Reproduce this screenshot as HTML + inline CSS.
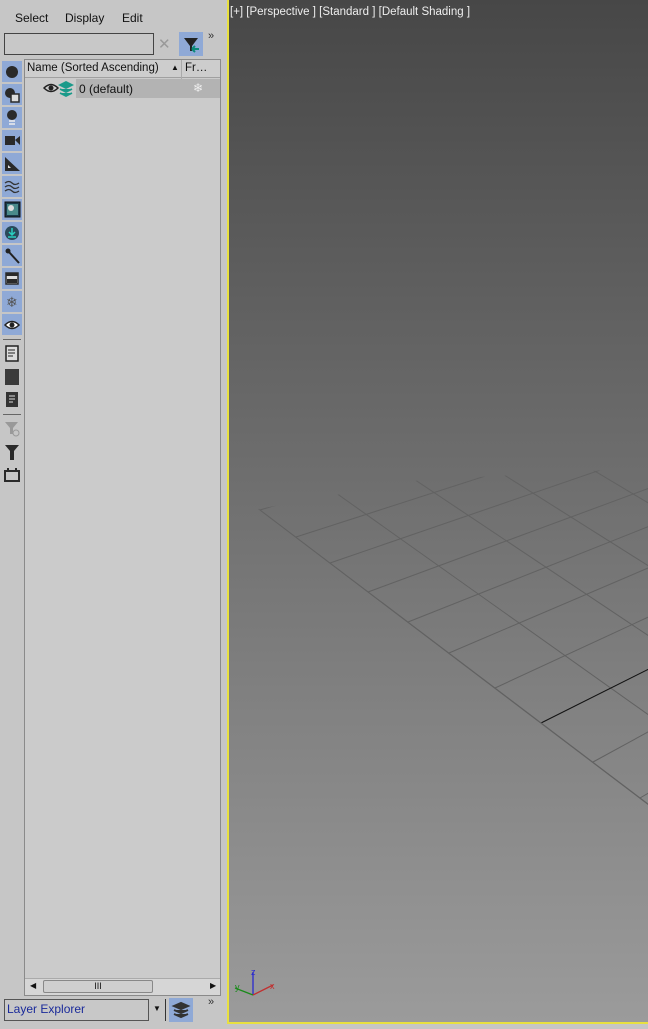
<!DOCTYPE html>
<html><head><meta charset="utf-8"><style>
*{margin:0;padding:0;box-sizing:border-box}
html,body{width:648px;height:1029px;overflow:hidden}
body{background:#c6c6c6;font-family:"Liberation Sans",sans-serif;font-size:12px;color:#111;position:relative}
.a{position:absolute}
.menu span{position:absolute;top:11px;font-size:12px}
.btn{position:absolute;left:2px;width:20px;height:21px;background:#8fa9d6}
.ic{position:absolute;left:2px;width:20px;height:21px}
.sep{position:absolute;left:3px;width:18px;height:1px;background:#666}
</style></head><body>
<div class="menu"><span style="left:15px">Select</span><span style="left:65px">Display</span><span style="left:122px">Edit</span></div>
<div class="a" style="left:4px;top:33px;width:150px;height:22px;border:1px solid #444;background:#c8c8c8"></div>
<div class="a" style="left:158px;top:35px;color:#999;font-size:15px">✕</div>
<div class="a" style="left:179px;top:32px;width:24px;height:24px;background:#8fa9d6">
<svg width="24" height="24"><path d="M5 6h14l-6 8v5h-2v-5z" fill="#222"/><path d="M13 17h7M13 17l3-3M13 17l3 3" stroke="#0a8a7a" stroke-width="2" fill="none"/></svg></div>
<div class="a" style="left:208px;top:30px;font-size:11px;color:#333">»</div>
<div class="a" style="left:208px;top:996px;font-size:11px;color:#333">»</div>
<div class="a" style="left:24px;top:59px;width:197px;height:937px;border:1px solid #8a8a8a;background:#cbcbcb"></div>
<div class="a" style="left:25px;top:60px;width:195px;height:18px;border-bottom:1px solid #a0a0a0;background:#cdcdcd"></div>
<div class="a" style="left:27px;top:62px;font-size:11.5px">Name (Sorted Ascending)</div>
<div class="a" style="left:171px;top:63px;font-size:8px">▲</div>
<div class="a" style="left:181px;top:60px;width:1px;height:38px;background:#aaa"></div>
<div class="a" style="left:185px;top:62px;font-size:11.5px">Fr…</div>
<div class="a" style="left:76px;top:79px;width:144px;height:19px;background:#b3b3b3"></div>
<div class="a" style="left:79px;top:82px;font-size:12px">0 (default)</div>
<div class="a" style="left:193px;top:81px;color:#eee;font-size:12px">❄</div>
<svg class="a" style="left:43px;top:81px" width="34" height="16"><path d="M1 7q7-7 14 0q-7 7-14 0z" fill="none" stroke="#222" stroke-width="1.5"/><circle cx="8" cy="7" r="2.5" fill="#222"/><path d="M17 4l6-3 6 3-6 3z M17 8l6 3 6-3 M17 12l6 3 6-3" fill="#1a9a8a" stroke="#1a9a8a" stroke-width="1.8"/></svg>
<div class="a" style="left:25px;top:978px;width:195px;height:17px;background:#d6d6d6;border-top:1px solid #aaa"></div>
<div class="a" style="left:30px;top:981px;font-size:8px">◀</div>
<div class="a" style="left:210px;top:981px;font-size:8px">▶</div>
<div class="a" style="left:43px;top:980px;width:110px;height:13px;border:1px solid #888;border-radius:2px;background:#cfcfcf;text-align:center;font-size:9px;line-height:11px">III</div>
<div class="a" style="left:4px;top:999px;width:145px;height:22px;border:1px solid #555;background:#c8c8c8;color:#1a2a9a;font-size:12px;padding:2px 2px">Layer Explorer</div>
<div class="a" style="left:153px;top:1004px;font-size:8px">▼</div>
<div class="a" style="left:165px;top:999px;width:1px;height:22px;background:#333"></div>
<div class="a" style="left:169px;top:998px;width:24px;height:24px;background:#8fa9d6">
<svg width="24" height="24"><path d="M5 8l7-3 7 3-7 3z M5 12l7 3 7-3 M5 16l7 3 7-3" fill="#333" stroke="#333" stroke-width="2"/></svg></div>
<div class="btn" style="top:61px"><svg width="20" height="21"><circle cx="10" cy="11" r="6" fill="#2a2a2a"/></svg></div>
<div class="btn" style="top:84px"><svg width="20" height="21"><circle cx="8" cy="9" r="5" fill="#2a2a2a"/><rect x="9" y="10" width="8" height="8" fill="#ddd" stroke="#2a2a2a" stroke-width="1.5"/></svg></div>
<div class="btn" style="top:107px"><svg width="20" height="21"><circle cx="10" cy="8" r="5" fill="#2a2a2a"/><path d="M7 14h6M7 17h6" stroke="#eee" stroke-width="1.5"/></svg></div>
<div class="btn" style="top:130px"><svg width="20" height="21"><rect x="3" y="6" width="10" height="9" fill="#2a2a2a"/><path d="M13 10l5-4v9z" fill="#2a2a2a"/></svg></div>
<div class="btn" style="top:153px"><svg width="20" height="21"><path d="M3 4v14h15z" fill="#2a2a2a"/><path d="M6 12v3h3z" fill="#ddd"/></svg></div>
<div class="btn" style="top:176px"><svg width="20" height="21"><path d="M3 7q4-3 7 0t7 0M3 11q4-3 7 0t7 0M3 15q4-3 7 0t7 0" stroke="#333" fill="none" stroke-width="1.3"/></svg></div>
<div class="btn" style="top:199px"><svg width="20" height="21"><rect x="3" y="3" width="15" height="15" fill="#1a3a4a" stroke="#111"/><rect x="5" y="5" width="11" height="11" fill="#4a8a8a"/><circle cx="9" cy="9" r="3" fill="#ddd"/></svg></div>
<div class="btn" style="top:222px"><svg width="20" height="21"><circle cx="10" cy="11" r="7" fill="#2a4a5a"/><path d="M10 6v7M7 10l3 3 3-3M6 15h8" stroke="#2ad0c0" stroke-width="1.5" fill="none"/></svg></div>
<div class="btn" style="top:245px"><svg width="20" height="21"><circle cx="6" cy="6" r="2.5" fill="#222"/><path d="M7 7l10 11" stroke="#222" stroke-width="2"/></svg></div>
<div class="btn" style="top:268px"><svg width="20" height="21"><rect x="4" y="5" width="12" height="11" fill="#ddd" stroke="#2a2a2a" stroke-width="1.5"/><rect x="4" y="5" width="12" height="3" fill="#2a2a2a"/><rect x="5" y="11" width="10" height="4" fill="#2a2a2a"/></svg></div>
<div class="btn" style="top:291px"><svg width="20" height="21"><text x="4" y="16" font-size="14" fill="#555">❄</text></svg></div>
<div class="btn" style="top:314px"><svg width="20" height="21"><path d="M3 11q7-7 14 0q-7 7-14 0z" fill="#fff" stroke="#222" stroke-width="1.5"/><circle cx="10" cy="11" r="2.5" fill="#222"/></svg></div>
<div class="sep" style="top:339px"></div>
<div class="ic" style="top:343px"><svg width="20" height="21"><rect x="4" y="3" width="12" height="15" fill="#ddd" stroke="#222" stroke-width="1.5"/><path d="M6 7h7M6 10h7M6 13h5" stroke="#222"/></svg></div>
<div class="ic" style="top:366px"><svg width="20" height="21"><rect x="3" y="3" width="14" height="16" fill="#3a3a3a"/></svg></div>
<div class="ic" style="top:389px"><svg width="20" height="21"><rect x="4" y="3" width="12" height="15" fill="#333"/><path d="M7 7h6M7 10h6M7 13h4" stroke="#ddd"/></svg></div>
<div class="sep" style="top:414px"></div>
<div class="ic" style="top:418px"><svg width="20" height="21"><path d="M3 4h13l-5 6v6h-3v-6z" fill="#999"/><circle cx="14" cy="15" r="3" fill="none" stroke="#999"/></svg></div>
<div class="ic" style="top:441px"><svg width="20" height="21"><path d="M3 4h14l-5 6v9h-4v-9z" fill="#2a2a2a"/></svg></div>
<div class="ic" style="top:464px"><svg width="20" height="21"><rect x="3" y="7" width="14" height="10" fill="none" stroke="#2a2a2a" stroke-width="2"/><path d="M6 4v3M14 4v3" stroke="#2a2a2a" stroke-width="2"/></svg></div>
<div class="a" style="left:227px;top:0;width:421px;height:1024px;border-left:2px solid #e8e040;border-bottom:2px solid #e8e040;background:linear-gradient(#474747,#9b9b9b)"></div>
<div class="a" style="left:230px;top:6px;color:#eee;font-size:11.5px">[+] [Perspective ] [Standard ] [Default Shading ]</div>
<svg class="a" style="left:0;top:0" width="648" height="1022">
<defs><clipPath id="cc"><polygon points="258,509 420,480 648,468 648,806"/></clipPath></defs>
<g clip-path="url(#cc)" stroke="#626262" stroke-width="1">
<line x1="-1219" y1="-611" x2="1038" y2="1100"/>
<line x1="-1219" y1="-611" x2="1191" y2="1100"/>
<line x1="-1219" y1="-611" x2="1344" y2="1100"/>
<line x1="-1219" y1="-611" x2="1496" y2="1100"/>
<line x1="-1219" y1="-611" x2="1649" y2="1100"/>
<line x1="-1219" y1="-611" x2="1801" y2="1100"/>
<line x1="260" y1="510" x2="2025" y2="-20"/>
<line x1="296" y1="537" x2="2025" y2="-20"/>
<line x1="330" y1="563" x2="2025" y2="-20"/>
<line x1="368" y1="592" x2="2025" y2="-20"/>
<line x1="408" y1="622" x2="2025" y2="-20"/>
<line x1="449" y1="653" x2="2025" y2="-20"/>
<line x1="495" y1="688" x2="2025" y2="-20"/>
<line x1="541" y1="723" x2="2025" y2="-20" stroke="#111"/>
<line x1="593" y1="762" x2="2025" y2="-20"/>
<line x1="640" y1="798" x2="2025" y2="-20"/>
</g>
<line x1="260" y1="510" x2="648" y2="804" stroke="#626262"/>
<g transform="translate(229,0)">
<path d="M24 995V972" stroke="#2a2ad0" stroke-width="1.3"/>
<path d="M24 995l-18-7" stroke="#1a8a1a" stroke-width="1.3"/>
<path d="M24 995l20-10" stroke="#c03030" stroke-width="1.3"/>
<text x="22" y="975" font-size="9" fill="#2a2ad0">z</text>
<text x="6" y="990" font-size="9" fill="#1a8a1a">y</text>
<text x="41" y="989" font-size="9" fill="#c03030">x</text>
</g>
</svg>
</body></html>
